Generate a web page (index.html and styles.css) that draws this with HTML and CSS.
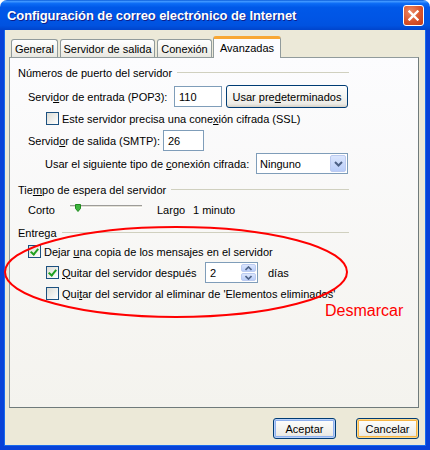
FILE: index.html
```html
<!DOCTYPE html>
<html lang="es">
<head>
  <meta charset="UTF-8">
  <title>Configuración de correo electrónico de Internet</title>
  <link rel="stylesheet" href="styles.css">
</head>
<body>
  <div class="window">
    <!-- Title bar -->
    <div class="titlebar">
      <span class="title">Configuración de correo electrónico de Internet</span>
      <span class="close">
        <svg width="11" height="11" viewBox="0 0 11 11"><path d="M1.5 1.5 L9.5 9.5 M9.5 1.5 L1.5 9.5" stroke="#fff" stroke-width="2.4" stroke-linecap="square"/></svg>
      </span>
    </div>

    <div class="frame">
      <!-- Tabs -->
      <div class="tabs">
        <div class="tab t-general">General</div>
        <div class="tab t-salida">Servidor de salida</div>
        <div class="tab t-conexion">Conexión</div>
        <div class="tab t-avanzadas active">Avanzadas</div>
      </div>

      <div class="panel">
        <div class="group-title"><span>Números de puerto del servidor</span></div>

        <div class="row row-pop">
          <span class="lbl w-pop">Servi<u>d</u>or de entrada (POP3):</span>
          <div class="field w-pop-input">110</div>
          <div class="btn btn-defaults">Usar pre<u>d</u>eterminados</div>
        </div>

        <div class="row row-check ind-2">
          <span class="check"></span>
          <span class="check-text">Este servidor precisa una cone<u>x</u>ión cifrada (SSL)</span>
        </div>

        <div class="row row-smtp">
          <span class="lbl w-smtp">Servid<u>o</u>r de salida (SMTP):</span>
          <div class="field w-smtp-input">26</div>
        </div>

        <div class="row row-select">
          <span class="lbl w-enc">Usar el siguiente tipo de <u>c</u>onexión cifrada:</span>
          <div class="field select">
            <span>Ninguno</span>
            <span class="drop">
              <svg width="9" height="6" viewBox="0 0 9 6"><path d="M1 1 L4.5 4.5 L8 1" fill="none" stroke="#4d6185" stroke-width="2"/></svg>
            </span>
          </div>
        </div>

        <div class="group-title g2"><span>Tie<u>m</u>po de espera del servidor</span></div>

        <div class="row row-slider">
          <span class="lbl w-corto">Corto</span>
          <div class="slider">
            <svg class="thumb" width="6" height="8" viewBox="0 0 6 8"><path d="M0.5 0.5 H5.5 V4.5 L3 7.5 L0.5 4.5 Z" fill="#3fb43f" stroke="#1f8a1f"/></svg>
          </div>
          <span class="lbl w-largo">Largo</span>
          <span class="lbl">1 minuto</span>
        </div>

        <div class="group-title g3"><span>Entrega</span></div>

        <div class="row row-check ind-1 cb1">
          <span class="check on"></span>
          <span class="check-text">Dejar <u>u</u>na copia de los mensajes en el servidor</span>
        </div>

        <div class="row row-days ind-2">
          <span class="check on"></span>
          <span class="check-text w-after"><u>Q</u>uitar del servidor después</span>
          <div class="field spin">
            <span>2</span>
            <span class="spin-btns">
              <span class="spin-btn"><svg width="7" height="5" viewBox="0 0 7 5"><path d="M0.5 4 L3.5 1 L6.5 4" fill="none" stroke="#4d6185" stroke-width="1.6"/></svg></span>
              <span class="spin-btn"><svg width="7" height="5" viewBox="0 0 7 5"><path d="M0.5 1 L3.5 4 L6.5 1" fill="none" stroke="#4d6185" stroke-width="1.6"/></svg></span>
            </span>
          </div>
          <span class="lbl days">días</span>
        </div>

        <div class="row row-check ind-2 cb3">
          <span class="check"></span>
          <span class="check-text">Qui<u>t</u>ar del servidor al eliminar de 'Elementos eliminados'</span>
        </div>
      </div>

      <!-- Dialog buttons -->
      <div class="footer">
        <div class="btn btn-dialog focus">Aceptar</div>
        <div class="btn btn-dialog default">Cancelar</div>
      </div>
    </div>

    <!-- Red annotation drawn over the dialog -->
    <svg class="mark" width="430" height="450" viewBox="0 0 430 450">
      <ellipse cx="176" cy="272" rx="171" ry="45" fill="none" stroke="#f00" stroke-width="2"/>
    </svg>
    <div class="note">Desmarcar</div>
  </div>
</body>
</html>
```

FILE: styles.css
```css
/* Reset some default styles */
* {
  margin: 0;
  padding: 0;
  box-sizing: border-box;
}

body {
  width: 430px;
  height: 450px;
  background: #fff;
  font-family: 'Liberation Sans', Arial, sans-serif;
  font-size: 11px;
  color: #000;
  overflow: hidden;
}

.window {
  position: relative;
  width: 430px;
  height: 450px;
  display: flex;
  flex-direction: column;
}

/* Title bar */
.titlebar {
  height: 30px;
  display: flex;
  align-items: center;
  justify-content: space-between;
  padding: 0 6px 0 7px;
  border-radius: 7px 7px 0 0;
  background: linear-gradient(to bottom, #0a5bd8 0%, #3d95ff 5%, #0b6bf5 12%, #0058e8 25%, #0055e5 60%, #0052e0 85%, #0044cc 100%);
}

.title {
  color: #fff;
  font-weight: bold;
  font-size: 13px;
  text-shadow: 1px 1px 0 #0f1e89;
  letter-spacing: -0.1px;
}

.close {
  width: 21px;
  height: 21px;
  margin-top: 1px;
  display: flex;
  align-items: center;
  justify-content: center;
  border: 1px solid #fff;
  border-radius: 3px;
  background: radial-gradient(circle at 35% 30%, #ec8a66, #d9542c 55%, #c33a18);
}

/* Window body */
.frame {
  flex: 1;
  display: flex;
  flex-direction: column;
  padding: 6px 7px 0 5px;
  background: #ece9d8;
  border: 4px solid #0842d8;
  border-top: none;
  box-shadow: inset 1px 0 0 #166aee, inset -1px 0 0 #166aee, inset 0 -1px 0 #166aee;
}

.tabs {
  display: flex;
  align-items: flex-end;
  height: 21px;
  padding-left: 2px;
  position: relative;
  z-index: 1;
}

.tab {
  height: 18px;
  margin-right: 2px;
  display: flex;
  align-items: center;
  justify-content: center;
  white-space: nowrap;
  border: 1px solid #919b9c;
  border-bottom: none;
  border-radius: 3px 3px 0 0;
  background: linear-gradient(to bottom, #fff, #f3f3ef 60%, #e8e7e0);
}

.t-general { width: 47px; }
.t-salida { width: 95px; }
.t-conexion { width: 55px; }
.t-avanzadas { width: 68px; }

.tab.active {
  height: 22px;
  margin-bottom: -1px;
  margin-left: -1px;
  padding-bottom: 2px;
  border-top: 3px solid #f8a735;
  background: #fcfcfe;
}

.panel {
  height: 351px;
  display: flex;
  flex-direction: column;
  padding: 8px 69px 0 8px;
  border: 1px solid #919b9c;
  border-right-color: #6f7a7b;
  border-bottom-color: #6f7a7b;
  background: linear-gradient(to bottom, #fcfcfe, #f4f3ee);
}

/* Group headings with rule */
.group-title {
  height: 13px;
  display: flex;
  align-items: center;
}

.group-title::after {
  content: "";
  flex: 1;
  margin-left: 5px;
  border-top: 1px solid #d0d0bf;
}

.g2 { margin-top: 9px; }
.g3 { margin-top: 6px; }

.row {
  display: flex;
  align-items: center;
  padding-left: 10px;
}

.row-pop { margin-top: 6px; height: 23px; }
.row-check { height: 13px; }
.row-pop + .row-check { margin-top: 4px; }
.row-smtp { margin-top: 5px; height: 21px; }
.row-select { margin-top: 2px; height: 21px; padding-left: 27px; }
.row-slider { margin-top: 3px; height: 21px; }
.row-days { margin-top: 4px; height: 21px; }
.cb1 { margin-top: 6px; padding-left: 10px; }
.cb3 { margin-top: 4px; }
.ind-2 { padding-left: 28px; }

.lbl { white-space: nowrap; }
.w-pop { width: 146px; }
.w-smtp { width: 135px; }
.w-enc { width: 211px; }
.w-corto { width: 42px; }
.w-largo { width: 36px; }
.w-after { width: 143px; }
.days { margin-left: 10px; }

/* Text fields */
.field {
  height: 21px;
  display: flex;
  align-items: center;
  padding-left: 4px;
  background: #fff;
  border: 1px solid #7f9db9;
}

.w-pop-input { width: 48px; margin-right: 4px; }
.w-smtp-input { width: 41px; }

.select {
  width: 92px;
  height: 21px;
  justify-content: space-between;
  padding: 1px 1px 1px 3px;
}

.drop {
  width: 16px;
  height: 17px;
  display: flex;
  align-items: center;
  justify-content: center;
  border-radius: 2px;
  background: linear-gradient(to bottom, #dbe6fd, #b9cdf9);
  border: 1px solid #bccbf0;
}

.spin {
  width: 53px;
  justify-content: space-between;
  padding: 1px 1px 1px 4px;
}

.spin-btns {
  display: flex;
  flex-direction: column;
  gap: 1px;
}

.spin-btn {
  width: 15px;
  height: 8px;
  display: flex;
  align-items: center;
  justify-content: center;
  border-radius: 2px;
  background: linear-gradient(to bottom, #dbe6fd, #b9cdf9);
  border: 1px solid #bccbf0;
}

/* Checkboxes */
.check {
  width: 13px;
  height: 13px;
  margin-right: 3px;
  flex-shrink: 0;
  border: 1px solid #1c5180;
  background: linear-gradient(135deg, #dcdcd5, #fff);
  position: relative;
}

.check.on::after {
  content: "";
  position: absolute;
  left: 3px;
  top: 1px;
  width: 3px;
  height: 6px;
  border: solid #21a121;
  border-width: 0 2px 2px 0;
  transform: rotate(40deg);
}

.check-text { white-space: nowrap; }

/* Slider */
.slider {
  width: 72px;
  height: 3px;
  margin-right: 15px;
  margin-top: -6px;
  position: relative;
  border-top: 1px solid #9d9c99;
  border-bottom: 1px solid #fff;
  background: #e4e2d8;
}

.thumb {
  position: absolute;
  left: 5px;
  top: -2px;
}

/* Buttons */
.btn {
  display: flex;
  align-items: center;
  justify-content: center;
  border: 1px solid #003c74;
  border-radius: 3px;
  background: linear-gradient(to bottom, #fff, #f4f4f0 50%, #ecebe6 85%, #d6d0c5);
  white-space: nowrap;
}

.btn-defaults {
  width: 122px;
  height: 23px;
}

.footer {
  display: flex;
  justify-content: flex-end;
  gap: 20px;
  margin-top: 10px;
}

.btn-dialog {
  width: 63px;
  height: 21px;
}

.btn-dialog.focus {
  box-shadow: inset 0 0 0 1px #b9d1fa, inset 0 0 0 2px #8fb1ee;
}

.btn-dialog.default {
  box-shadow: inset 0 0 0 1px #fdd889, inset 0 0 0 2px #f7b646;
}

/* Red annotation over the dialog */
.mark {
  position: absolute;
  left: 0;
  top: 0;
  pointer-events: none;
}

.note {
  position: absolute;
  left: 325px;
  top: 302px;
  color: #f00;
  font-size: 16px;
}
```
